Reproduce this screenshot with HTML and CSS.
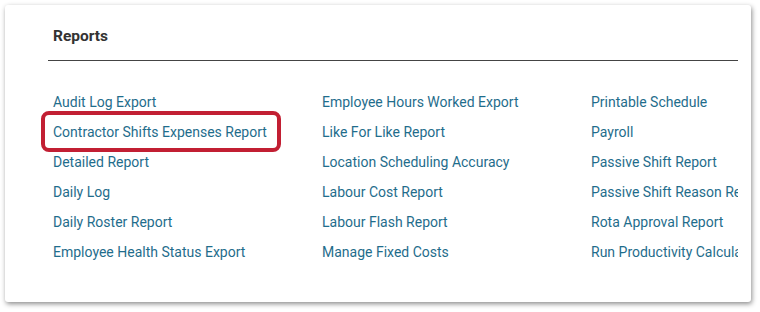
FILE: index.html
```html
<!DOCTYPE html>
<html>
  <head>
    <meta charset="utf-8">
    <title>Reports</title>
    <link rel="stylesheet" href="styles.css">
  </head>
  <body>
    <div class="card">
      <h2 class="card-title">Reports</h2>
      <ul class="report-list">
        <li><a href="#">Audit Log Export</a></li>
        <li><a href="#">Employee Hours Worked Export</a></li>
        <li><a href="#">Printable Schedule</a></li>
        <li><a href="#" class="highlight">Contractor Shifts Expenses Report</a></li>
        <li><a href="#">Like For Like Report</a></li>
        <li><a href="#">Payroll</a></li>
        <li><a href="#">Detailed Report</a></li>
        <li><a href="#">Location Scheduling Accuracy</a></li>
        <li><a href="#">Passive Shift Report</a></li>
        <li><a href="#">Daily Log</a></li>
        <li><a href="#">Labour Cost Report</a></li>
        <li><a href="#">Passive Shift Reason Report</a></li>
        <li><a href="#">Daily Roster Report</a></li>
        <li><a href="#">Labour Flash Report</a></li>
        <li><a href="#">Rota Approval Report</a></li>
        <li><a href="#">Employee Health Status Export</a></li>
        <li><a href="#">Manage Fixed Costs</a></li>
        <li><a href="#">Run Productivity Calculation</a></li>
      </ul>
    </div>
  </body>
</html>
```

FILE: styles.css
```css
body {
  margin: 0;
  padding: 5px 9px 10px 5px;
  background-color: #ffffff;
  font-family: Roboto, "Liberation Sans", sans-serif;
}

.card {
  background-color: #ffffff;
  border-radius: 3px;
  box-shadow: 1px 2px 5px rgba(0, 0, 0, 0.45);
  height: 297px;
  box-sizing: border-box;
  padding: 21px 13px 0 43px;
}

.card-title {
  margin: 0;
  padding: 0 0 14px 5px;
  font-size: 15.5px;
  line-height: 20px;
  font-weight: 700;
  color: #333333;
  border-bottom: 1px solid #444444;
}

.report-list {
  list-style: none;
  margin: 26px 0 0;
  padding: 0 0 0 5px;
  display: grid;
  grid-template-columns: 269px 269px 1fr;
  grid-auto-rows: 30px;
}

.report-list li {
  min-width: 0;
  white-space: nowrap;
  line-height: 30px;
}

/* last column is cut by the card edge, like in the app */
.report-list li:nth-child(3n) {
  overflow: hidden;
}

.report-list a {
  font-size: 14px;
  color: #1f6d8c;
  text-decoration: none;
}

.highlight {
  position: relative;
}

.highlight::after {
  content: "";
  position: absolute;
  left: -12px;
  right: -14px;
  top: -13px;
  bottom: -12px;
  border: 4px solid #c21f33;
  border-radius: 8px;
}
```
